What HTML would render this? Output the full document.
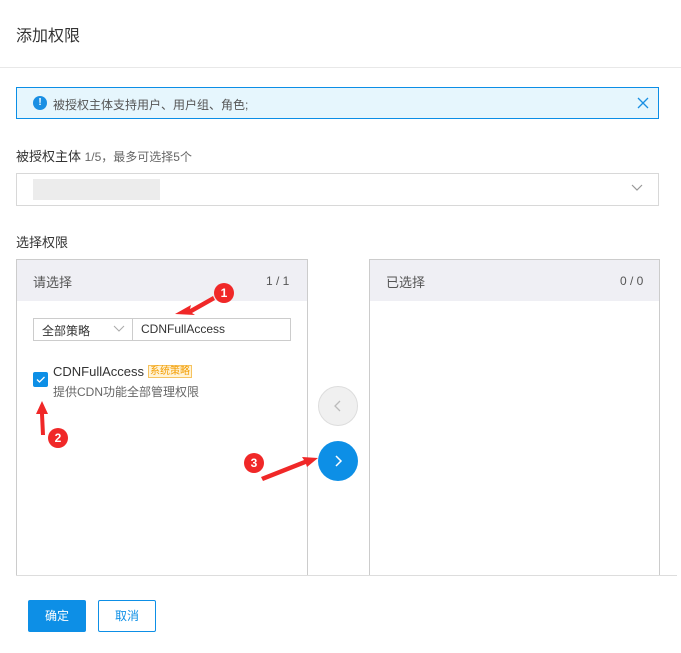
<!DOCTYPE html>
<html><head><meta charset="utf-8"><style>
*{box-sizing:border-box;margin:0;padding:0}
body{width:681px;height:653px;background:#fff;font-family:"Liberation Sans","Noto Sans CJK SC",sans-serif;color:#333;position:relative;overflow:hidden;font-size:12px}
.a{position:absolute}
</style></head><body>
<div class="a" style="left:16px;top:22px;font-size:16px;color:#333">添加权限</div>
<div class="a" style="left:0;top:67px;width:681px;height:1px;background:#e8e8e8"></div>
<div class="a" style="left:16px;top:87px;width:643px;height:32px;border:1px solid #0b8ee6;background:#e6f6fd"></div>
<div class="a" style="left:33px;top:96px;width:14px;height:14px;border-radius:50%;background:#1a8fe3;color:#fff;font-size:10px;font-weight:bold;text-align:center;line-height:14px">!</div>
<div class="a" style="left:53px;top:96px;color:#555">被授权主体支持用户、用户组、角色;</div>
<svg class="a" style="left:637px;top:97px" width="12" height="12"><path d="M1 1l10 10M11 1L1 11" stroke="#1a8fe3" stroke-width="1.3"/></svg>
<div class="a" style="left:16px;top:146px;font-size:13px;color:#333">被授权主体 <span style="font-size:12px;color:#666">1/5，最多可选择5个</span></div>
<div class="a" style="left:16px;top:173px;width:643px;height:33px;border:1px solid #d8d8d8"></div>
<div class="a" style="left:33px;top:179px;width:127px;height:21px;background:#ececec"></div>
<svg class="a" style="left:630px;top:183px" width="14" height="10"><path d="M2 2l5 5 5-5" fill="none" stroke="#999" stroke-width="1.2"/></svg>
<div class="a" style="left:16px;top:232px;font-size:13px">选择权限</div>
<div class="a" style="left:16px;top:259px;width:292px;height:317px;border:1px solid #ccc;border-bottom:none"></div>
<div class="a" style="left:17px;top:260px;width:290px;height:41px;background:#efeff4"></div>
<div class="a" style="left:33px;top:272px;font-size:13px;color:#555">请选择</div>
<div class="a" style="left:266px;top:274px;color:#555">1 / 1</div>
<div class="a" style="left:369px;top:259px;width:291px;height:317px;border:1px solid #ccc;border-bottom:none"></div>
<div class="a" style="left:370px;top:260px;width:289px;height:41px;background:#efeff4"></div>
<div class="a" style="left:386px;top:272px;font-size:13px;color:#555">已选择</div>
<div class="a" style="left:620px;top:274px;color:#555">0 / 0</div>
<div class="a" style="left:16px;top:575px;width:661px;height:1px;background:#ddd"></div>
<div class="a" style="left:33px;top:318px;width:100px;height:23px;border:1px solid #ccc"></div>
<div class="a" style="left:42px;top:322px;color:#333">全部策略</div>
<svg class="a" style="left:113px;top:325px" width="12" height="8"><path d="M1 1l5 5 5-5" fill="none" stroke="#aaa" stroke-width="1"/></svg>
<div class="a" style="left:132px;top:318px;width:159px;height:23px;border:1px solid #ccc"></div>
<div class="a" style="left:141px;top:322px;color:#333">CDNFullAccess</div>
<div class="a" style="left:33px;top:372px;width:15px;height:15px;background:#0d8fe6;border-radius:2px"></div>
<svg class="a" style="left:33px;top:372px" width="15" height="15"><path d="M4 7.5l2.5 2.5 5-5" fill="none" stroke="#fff" stroke-width="1.3"/></svg>
<div class="a" style="left:53px;top:364px;font-size:13px;color:#333">CDNFullAccess</div>
<div class="a" style="left:148px;top:365px;font-size:10px;color:#f39c00;background:#fff3d6;border:1px solid #f6c35f;padding:0 1px;line-height:11px">系统策略</div>
<div class="a" style="left:53px;top:383px;color:#666">提供CDN功能全部管理权限</div>
<div class="a" style="left:318px;top:386px;width:40px;height:40px;border-radius:50%;background:#f0f0f0;border:1px solid #ddd"></div>
<svg class="a" style="left:318px;top:386px" width="40" height="40"><path d="M22 15l-5 5 5 5" fill="none" stroke="#bbb" stroke-width="1.3"/></svg>
<div class="a" style="left:318px;top:441px;width:40px;height:40px;border-radius:50%;background:#0d8fe6"></div>
<svg class="a" style="left:318px;top:441px" width="40" height="40"><path d="M18 15l5 5-5 5" fill="none" stroke="#fff" stroke-width="1.5"/></svg>
<svg class="a" style="left:0;top:0" width="681" height="653">
<g fill="#f02828"><circle cx="224" cy="293" r="10"/><circle cx="58" cy="438" r="10"/><circle cx="254" cy="463" r="10"/>
<path d="M175 314l16-9-1 4 23-13 2 4-23 13 3 2z"/>
<path d="M42 401l-6 13 4 0 1 21 4 0-1-21 4 0z"/>
<path d="M318 458l-16-1 2 3-43 17 2 4 43-17 1 3z"/></g>
<g fill="#fff" font-size="12" font-family="Liberation Sans" text-anchor="middle" font-weight="bold"><text x="224" y="297">1</text><text x="58" y="442">2</text><text x="254" y="467">3</text></g>
</svg>
<div class="a" style="left:28px;top:600px;width:58px;height:32px;background:#0d8fe6;border-radius:2px;color:#fff;text-align:center;line-height:32px">确定</div>
<div class="a" style="left:98px;top:600px;width:58px;height:32px;border:1px solid #0d8fe6;border-radius:2px;color:#0d8fe6;text-align:center;line-height:30px">取消</div>
</body></html>
